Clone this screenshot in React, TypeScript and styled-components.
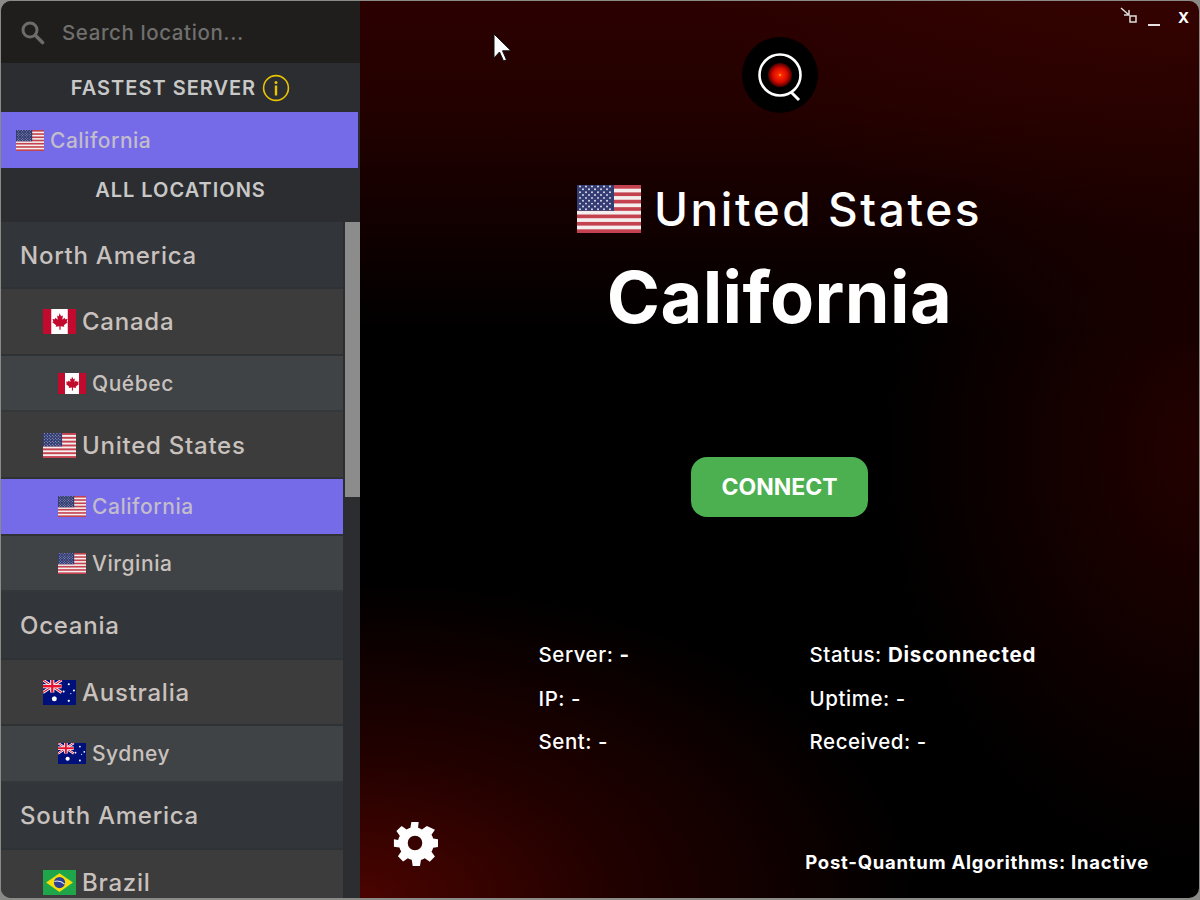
import styled, { createGlobalStyle } from 'styled-components';

const GlobalStyle = createGlobalStyle`
  html, body {
    margin: 0;
    padding: 0;
    height: 100%;
    background: #8a8a86;
  }
  #root {
    height: 100%;
  }
  * {
    box-sizing: border-box;
  }
`;

const Window = styled.div`
  display: flex;
  position: relative;
  width: 1200px;
  height: 900px;
  padding: 1px 1px 2px 1px;
  overflow: hidden;
  font-family: Inter, "Noto Sans", sans-serif;
`;

const Frame = styled.div`
  display: flex;
  width: 100%;
  height: 100%;
  border-radius: 10px;
  overflow: hidden;
`;

const Sidebar = styled.aside`
  display: flex;
  flex-direction: column;
  flex: 0 0 359px;
  height: 100%;
  background: #2b2d30;
`;

const SearchBar = styled.div`
  display: flex;
  align-items: center;
  flex: 0 0 62px;
  padding-left: 19px;
  gap: 17px;
  background: #1f1e1c;
  color: #6f6f6e;
  font-size: 20.5px;
  font-weight: 500;
  letter-spacing: 0.6px;
`;

const Heading = styled.div<{ $height: number; $lift?: number }>`
  display: flex;
  align-items: center;
  justify-content: center;
  gap: 6px;
  flex: 0 0 ${(p) => p.$height}px;
  padding-bottom: ${(p) => p.$lift ?? 0}px;
  color: #c8c8c8;
  font-size: 20px;
  font-weight: 600;
  letter-spacing: 1px;
`;

const FastestRow = styled.div`
  display: flex;
  align-items: center;
  flex: 0 0 56px;
  padding-left: 15px;
  gap: 6px;
  margin-right: 2px;
  background: #756be8;
  color: #c2bccb;
  font-size: 21px;
  font-weight: 500;
  letter-spacing: 0.5px;
`;

const ListArea = styled.div`
  display: flex;
  flex: 1;
  min-height: 0;
  overflow: hidden;
`;

const LocationList = styled.div`
  display: flex;
  flex-direction: column;
  flex: 0 0 342px;
`;

const Scrollbar = styled.div`
  flex: 0 0 17px;
  padding-left: 2px;
`;

const ScrollThumb = styled.div`
  width: 15px;
  height: 275px;
  background: #8c8c8c;
`;

const RegionRow = styled.div`
  display: flex;
  align-items: center;
  flex: 0 0 67.2px;
  padding: 1px 0 0 19px;
  background: #32363a;
  border-bottom: 2px solid #2f3235;
  color: #c9c1be;
  font-size: 24px;
  font-weight: 500;
  letter-spacing: 0.75px;
`;

const CountryRow = styled.div`
  display: flex;
  align-items: center;
  flex: 0 0 66.4px;
  padding: 1px 0 0 42px;
  gap: 6px;
  background: #3b3c3b;
  border-bottom: 2px solid #2f3235;
  color: #c9c1be;
  font-size: 24px;
  font-weight: 500;
  letter-spacing: 0.75px;
`;

const CityRow = styled.div<{ $active?: boolean }>`
  display: flex;
  align-items: center;
  flex: 0 0 56.8px;
  padding: 1px 0 0 57px;
  gap: 6px;
  background: ${(p) => (p.$active ? '#756be8' : '#3f4345')};
  border-bottom: 2px solid ${(p) => (p.$active ? '#2f3235' : '#35383a')};
  color: ${(p) => (p.$active ? '#c2bccb' : '#c9c1be')};
  font-size: 21px;
  font-weight: 500;
  letter-spacing: 0.55px;
`;

const Main = styled.main`
  position: relative;
  display: flex;
  flex-direction: column;
  align-items: center;
  flex: 1;
  height: 100%;
  color: #fff;
  background:
    radial-gradient(ellipse 560px 320px at 0% 100%, #4a0400 0%, rgba(60, 2, 0, 0.55) 45%, transparent 100%),
    radial-gradient(ellipse 320px 420px at 100% 50%, rgba(38, 1, 0, 0.9) 0%, transparent 100%),
    radial-gradient(ellipse 500px 240px at 100% 0%, rgba(60, 4, 0, 0.5) 0%, transparent 100%),
    linear-gradient(180deg, #2b0100 0%, #220100 12%, #100000 26%, #000 37%, #000 100%);
`;

const WindowControls = styled.div`
  position: absolute;
  top: 5px;
  right: 10px;
  display: flex;
  align-items: flex-start;
  gap: 10px;
  color: #fff;
  font-size: 15px;
  font-weight: 700;
`;

const Minimize = styled.span`
  width: 12px;
  height: 2px;
  margin-top: 18px;
  background: #e6e0e0;
`;

const Close = styled.span`
  margin: 3px 0 0 8px;
  line-height: 18px;
`;

const LogoBadge = styled.div`
  display: flex;
  width: 76px;
  height: 76px;
  margin-top: 36px;
  border-radius: 50%;
  background: #000;
`;

const CountryLine = styled.div`
  display: flex;
  align-items: center;
  gap: 13px;
  margin-top: 70px;
  height: 52px;
  font-size: 46px;
  font-weight: 500;
  letter-spacing: 2.55px;
`;

const CityTitle = styled.h1`
  margin: 20px 0 0;
  height: 84px;
  line-height: 84px;
  font-size: 72px;
  font-weight: 700;
  letter-spacing: 0.4px;
`;

const ConnectButton = styled.button`
  width: 177px;
  height: 60px;
  margin-top: 118px;
  border: 0;
  border-radius: 16px;
  background: #4caf50;
  color: #fff;
  font-family: inherit;
  font-size: 23px;
  font-weight: 700;
`;

const StatsGrid = styled.div`
  display: grid;
  grid-template-columns: 271px 271px;
  grid-auto-rows: 43.5px;
  margin-top: 116px;
  margin-left: 60px;
  font-size: 20.5px;
  font-weight: 500;
  letter-spacing: 0.55px;
  align-items: center;
`;

const StatValue = styled.span`
  font-weight: 700;
  letter-spacing: 0.8px;
`;

const Footer = styled.div`
  display: flex;
  align-items: flex-start;
  justify-content: space-between;
  width: 100%;
  margin-top: auto;
  padding: 0 50px 25px 32px;
`;

const PqStatus = styled.div`
  margin-top: 31px;
  font-size: 18.5px;
  font-weight: 700;
  letter-spacing: 0.75px;
`;

const Cursor = styled.svg`
  position: absolute;
  top: 32px;
  left: 133px;
`;

const STAR_ROWS = [1.5, 4.3, 7.2, 10, 12.9, 15.8, 18.6, 21.5, 24.3];

const UsFlag = ({ width, height }: { width: number; height: number }) => (
  <svg width={width} height={height} viewBox="0 0 64 48" preserveAspectRatio="none">
    <rect width="64" height="48" fill="#f4eeee" />
    {[0, 1, 2, 3, 4, 5, 6].map((i) => (
      <rect key={i} y={i * 7.385} width="64" height="3.69" fill="#c4424f" />
    ))}
    <rect width="37" height="25.8" fill="#333d73" />
    {STAR_ROWS.map((y, r) =>
      (r % 2 ? [6, 12, 18, 24, 30] : [3, 9, 15, 21, 27, 33]).map((x) => (
        <circle key={`${r}-${x}`} cx={x} cy={y} r="0.95" fill="#e5e5f0" />
      )),
    )}
  </svg>
);

const CaFlag = ({ width, height }: { width: number; height: number }) => (
  <svg width={width} height={height} viewBox="0 0 32 24" preserveAspectRatio="none">
    <rect width="32" height="24" fill="#fff" />
    <rect width="8" height="24" fill="#c20a2f" />
    <rect x="24" width="8" height="24" fill="#c20a2f" />
    <path
      d="M16 4l1.6 3 1.7-.8-.6 4.2 2.2-1.9.6 1.4 2.3-.3-.8 2.4 1 .6-3.8 3 .5 1.4-3.6-.5V20h-1.2v-3.500l-3.600.5.5-1.400-3.800-3 1-.6-.8-2.400 2.300.3.6-1.400 2.200 1.900-.6-4.200 1.700.8z"
      fill="#c20a2f"
    />
  </svg>
);

const AuFlag = ({ width, height }: { width: number; height: number }) => (
  <svg width={width} height={height} viewBox="0 0 32 24" preserveAspectRatio="none">
    <rect width="32" height="24" fill="#00107a" />
    <path d="M0 0l18 12M18 0L0 12" stroke="#fff" strokeWidth="2.6" />
    <path d="M0 0l18 12M18 0L0 12" stroke="#e8112d" strokeWidth="1" />
    <path d="M9 0v12M0 6h18" stroke="#fff" strokeWidth="4" />
    <path d="M9 0v12M0 6h18" stroke="#e8112d" strokeWidth="2.2" />
    <circle cx="11" cy="18" r="2.4" fill="#fff" />
    <circle cx="25" cy="4" r="1" fill="#fff" />
    <circle cx="20" cy="11" r="1" fill="#fff" />
    <circle cx="30" cy="10" r="1" fill="#fff" />
    <circle cx="25" cy="20" r="1.1" fill="#fff" />
    <circle cx="27" cy="13" r="0.6" fill="#fff" />
  </svg>
);

const BrFlag = ({ width, height }: { width: number; height: number }) => (
  <svg width={width} height={height} viewBox="0 0 32 24" preserveAspectRatio="none">
    <rect width="32" height="24" fill="#1fa64a" />
    <path d="M16 3l13 9-13 9-13-9z" fill="#f8dc0c" />
    <circle cx="16" cy="12" r="5.4" fill="#2d3f95" />
    <path d="M11 11c4-1 7 0 10 2.6" stroke="#e8e8e8" strokeWidth="1" fill="none" />
  </svg>
);

const SearchIcon = () => (
  <svg width="25" height="25" viewBox="0 0 25 25" fill="none" stroke="#6c6c6b">
    <circle cx="10" cy="10" r="7" strokeWidth="3" />
    <path d="M15.5 15.5l7 7" strokeWidth="3.6" strokeLinecap="round" />
  </svg>
);

const InfoIcon = () => (
  <svg width="28" height="28" viewBox="0 0 28 28" fill="none">
    <circle cx="14" cy="14" r="12.4" stroke="#e9c400" strokeWidth="1.6" />
    <circle cx="14" cy="8.5" r="1.5" fill="#e9c400" />
    <rect x="12.8" y="11.5" width="2.4" height="10" fill="#e9c400" />
  </svg>
);

const RestoreIcon = () => (
  <svg width="18" height="18" viewBox="0 0 18 18" fill="none" stroke="#e0dcdc">
    <path d="M1 2l8 7M9 4v5H4" strokeWidth="1.5" />
    <rect x="10" y="10" width="6" height="6" strokeWidth="1.5" />
  </svg>
);

const LogoIcon = () => (
  <svg width="76" height="76" viewBox="0 0 76 76" fill="none">
    <defs>
      <radialGradient id="eye">
        <stop offset="0" stopColor="#ffd21e" />
        <stop offset="0.14" stopColor="#ff2a00" />
        <stop offset="0.6" stopColor="#d80a00" />
        <stop offset="1" stopColor="#480000" />
      </radialGradient>
    </defs>
    <circle cx="38" cy="38" r="12" fill="url(#eye)" />
    <circle cx="38" cy="38" r="20.5" stroke="#fff" strokeWidth="2.6" />
    <path d="M49 55l8 8" stroke="#fff" strokeWidth="3" />
  </svg>
);

const GearIcon = () => (
  <svg width="46" height="46" viewBox="0 0 24 24" fill="#fff">
    <path d="M13.9 1h-3.8l-.5 3a8 8 0 0 0-2 .9L5 3.1 2.3 5.8l1.8 2.6c-.4.6-.7 1.3-.9 2L1 10.100v3.800l2.900.5c.2.7.5 1.400.9 2l-1.700 2.500L5.800 21.700l2.500-1.800c.6.4 1.300.7 2 .9l.5 3.200h3.800l.5-3.100c.7-.2 1.400-.5 2-.9l2.600 1.800 2.700-2.700-1.800-2.600c.4-.6.7-1.300.9-2l3.100-.5v-3.800l-3.100-.5a8 8 0 0 0-.9-2l1.800-2.600L18.200 3.100l-2.600 1.800a8 8 0 0 0-2-.9zM12 8.200a3.800 3.800 0 1 1 0 7.600 3.800 3.800 0 0 1 0-7.600z" />
  </svg>
);

const App = () => (
  <>
    <GlobalStyle />
    <Window>
      <Frame>
        <Sidebar>
          <SearchBar>
            <SearchIcon />
            Search location...
          </SearchBar>
          <Heading $height={49}>
            FASTEST SERVER
            <InfoIcon />
          </Heading>
          <FastestRow>
            <UsFlag width={28} height={21} />
            California
          </FastestRow>
          <Heading $height={54} $lift={10}>ALL LOCATIONS</Heading>
          <ListArea>
            <LocationList>
              <RegionRow>North America</RegionRow>
              <CountryRow>
                <CaFlag width={33} height={25} />
                Canada
              </CountryRow>
              <CityRow>
                <CaFlag width={28} height={21} />
                Québec
              </CityRow>
              <CountryRow>
                <UsFlag width={33} height={25} />
                United States
              </CountryRow>
              <CityRow $active>
                <UsFlag width={28} height={21} />
                California
              </CityRow>
              <CityRow>
                <UsFlag width={28} height={21} />
                Virginia
              </CityRow>
              <RegionRow>Oceania</RegionRow>
              <CountryRow>
                <AuFlag width={33} height={25} />
                Australia
              </CountryRow>
              <CityRow>
                <AuFlag width={28} height={21} />
                Sydney
              </CityRow>
              <RegionRow>South America</RegionRow>
              <CountryRow>
                <BrFlag width={33} height={25} />
                Brazil
              </CountryRow>
            </LocationList>
            <Scrollbar>
              <ScrollThumb />
            </Scrollbar>
          </ListArea>
        </Sidebar>
        <Main>
          <Cursor width="20" height="30" viewBox="0 0 20 30">
            <path d="M1 1v24l5.5-6 4 9 3-1.200-4-9H18z" fill="#fff" stroke="#111" strokeWidth="1" />
          </Cursor>
          <WindowControls>
            <RestoreIcon />
            <Minimize />
            <Close>X</Close>
          </WindowControls>
          <LogoBadge>
            <LogoIcon />
          </LogoBadge>
          <CountryLine>
            <UsFlag width={64} height={48} />
            United States
          </CountryLine>
          <CityTitle>California</CityTitle>
          <ConnectButton>CONNECT</ConnectButton>
          <StatsGrid>
            <span>
              Server: <StatValue>-</StatValue>
            </span>
            <span>
              Status: <StatValue>Disconnected</StatValue>
            </span>
            <span>IP: -</span>
            <span>Uptime: -</span>
            <span>Sent: -</span>
            <span>Received: -</span>
          </StatsGrid>
          <Footer>
            <GearIcon />
            <PqStatus>Post-Quantum Algorithms: Inactive</PqStatus>
          </Footer>
        </Main>
      </Frame>
    </Window>
  </>
);

export default App;
